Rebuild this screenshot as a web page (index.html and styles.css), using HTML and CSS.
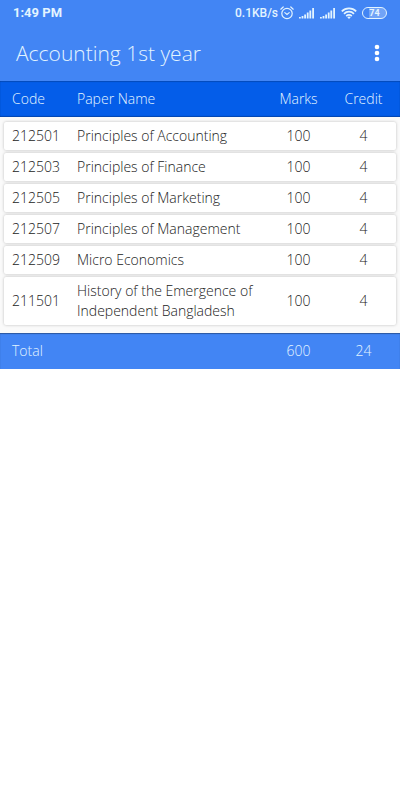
FILE: index.html
```html
<!DOCTYPE html>
<html lang="en">
  <head>
    <meta charset="UTF-8" />
    <meta name="viewport" content="width=device-width, initial-scale=1.0" />
    <title>Accounting 1st year</title>
    <link rel="stylesheet" href="styles.css">
  </head>
  <body>
    <header class="top">
      <div class="status">
        <span>1:49 PM</span>
        <div class="status-icons">
          <span class="speed">0.1KB/s</span>
          <svg width="14" height="14" viewBox="0 0 14 14" fill="none" stroke="currentColor" stroke-width="1.2" stroke-linecap="round" aria-hidden="true">
            <circle cx="7" cy="7.5" r="5.2" />
            <path d="M.8 3.2 3.2 1M13.2 3.2 10.8 1M4.8 6.6l2.2 1.8 2.2-1.8" />
          </svg>
          <svg width="16" height="12" viewBox="0 0 16 12" fill="currentColor" aria-hidden="true">
            <path d="M0 10h1.8v1.5H0zM2.6 9h1.8v2.5H2.6zM5.2 7.5H7v4H5.2zM7.8 5.5h1.8v6H7.8zM10.4 3.5h1.8v8h-1.8zM13.2 1H15v10.5h-1.8z" />
          </svg>
          <svg width="16" height="12" viewBox="0 0 16 12" fill="currentColor" aria-hidden="true">
            <path d="M0 10h1.8v1.5H0zM2.6 9h1.8v2.5H2.6zM5.2 7.5H7v4H5.2zM7.8 5.5h1.8v6H7.8zM10.4 3.5h1.8v8h-1.8zM13.2 1H15v10.5h-1.8z" />
          </svg>
          <svg width="16" height="12" viewBox="0 0 16 12" fill="none" stroke="currentColor" stroke-width="1.7" aria-hidden="true">
            <path d="M.8 4.3a10.2 10.2 0 0 1 14.4 0M3 6.8a7 7 0 0 1 10 0M5.2 9.1a4 4 0 0 1 5.6 0" />
            <path d="M6.3 10.3a2.4 2.4 0 0 1 3.4 0L8 12z" fill="currentColor" stroke="none" />
          </svg>
          <span class="battery">74</span>
        </div>
      </div>

      <div class="app-bar">
        <h1>Accounting 1st year</h1>
        <button type="button" aria-label="More options">
          <svg width="6" height="18" viewBox="0 0 6 18" fill="currentColor" aria-hidden="true">
            <circle cx="3" cy="3" r="2.3" />
            <circle cx="3" cy="9" r="2.3" />
            <circle cx="3" cy="15" r="2.3" />
          </svg>
        </button>
      </div>
    </header>

    <main>
      <table class="papers">
        <thead>
          <tr>
            <th scope="col">Code</th>
            <th scope="col">Paper Name</th>
            <th scope="col">Marks</th>
            <th scope="col">Credit</th>
          </tr>
        </thead>
        <tbody>
          <tr>
            <td>212501</td>
            <td>Principles of Accounting</td>
            <td>100</td>
            <td>4</td>
          </tr>
          <tr>
            <td>212503</td>
            <td>Principles of Finance</td>
            <td>100</td>
            <td>4</td>
          </tr>
          <tr>
            <td>212505</td>
            <td>Principles of Marketing</td>
            <td>100</td>
            <td>4</td>
          </tr>
          <tr>
            <td>212507</td>
            <td>Principles of Management</td>
            <td>100</td>
            <td>4</td>
          </tr>
          <tr>
            <td>212509</td>
            <td>Micro Economics</td>
            <td>100</td>
            <td>4</td>
          </tr>
          <tr>
            <td>211501</td>
            <td>History of the Emergence of Independent Bangladesh</td>
            <td>100</td>
            <td>4</td>
          </tr>
        </tbody>
        <tfoot>
          <tr>
            <th scope="row">Total</th>
            <td></td>
            <td>600</td>
            <td>24</td>
          </tr>
        </tfoot>
      </table>
    </main>
  </body>
</html>
```
FILE: styles.css
```css
/*
  Global styles
*/

:root {
  --blue: #4285f4;
  --dark-blue: #045de9;
  --light: #e3f4ff;
}
* {
  margin: 0;
  padding: 0;
  box-sizing: border-box;
}
body {
  min-height: 100vh;
  background-color: white;
  font-family: "Open Sans", sans-serif;
}

/*
  Status bar and title
*/

.top {
  color: var(--light);
  background-color: var(--blue);
}
.status {
  display: flex;
  height: 25px;
  padding: 0 13px;
  align-items: center;
  justify-content: space-between;
  font: 700 13px "Roboto", sans-serif;
}
.status-icons {
  display: flex;
  align-items: center;
}
.status-icons svg {
  margin-right: 5px;
}
.speed {
  margin-right: 2px;
  font-size: 12px;
  font-weight: 500;
}
.battery {
  width: 25px;
  height: 12px;
  font-size: 9px;
  line-height: 10px;
  text-align: center;
  border: 1px solid;
  border-radius: 6px;
  background-image: linear-gradient(to right, transparent 25%, rgb(255 255 255 / 25%) 25%);
}
.app-bar {
  display: flex;
  height: 56px;
  padding: 0 14px 0 16px;
  align-items: center;
  justify-content: space-between;
}
.app-bar h1 {
  font-size: 21px;
  font-weight: 300;
}
.app-bar button {
  display: flex;
  width: 18px;
  height: 32px;
  border: none;
  color: white;
  cursor: pointer;
  background: none;
  align-items: center;
  justify-content: center;
}

/*
  Papers table
*/

.papers,
.papers thead,
.papers tfoot {
  display: block;
}
.papers {
  color: #222;
  font-size: 14px;
  line-height: 20px;
}
.papers tr {
  display: grid;
  align-items: center;
  grid-template-columns: 65px 1fr 65px 65px;
}
.papers th,
.papers td {
  font-weight: 300;
  text-align: left;
}
.papers th:nth-child(n + 3),
.papers td:nth-child(n + 3) {
  text-align: center;
}
.papers thead tr,
.papers tfoot tr {
  height: 36px;
  padding: 0 4px 0 12px;
  color: var(--light);
}
.papers thead {
  background-color: var(--dark-blue);
  box-shadow: inset 0 1px 1px rgb(0 0 0 / 20%), inset 0 -1px 1px rgb(0 0 0 / 25%);
}
.papers tbody {
  display: grid;
  gap: 3px;
  padding: 5px 4px 8px;
  background-color: #fafafa;
}
.papers tbody tr {
  padding: 4px 0 4px 8px;
  border-radius: 2px;
  background-color: white;
  box-shadow: 0 0 3px rgb(0 0 0 / 25%);
}
.papers tfoot {
  background-color: var(--blue);
  box-shadow: inset 0 1px 1px rgb(0 0 0 / 35%);
}
```
